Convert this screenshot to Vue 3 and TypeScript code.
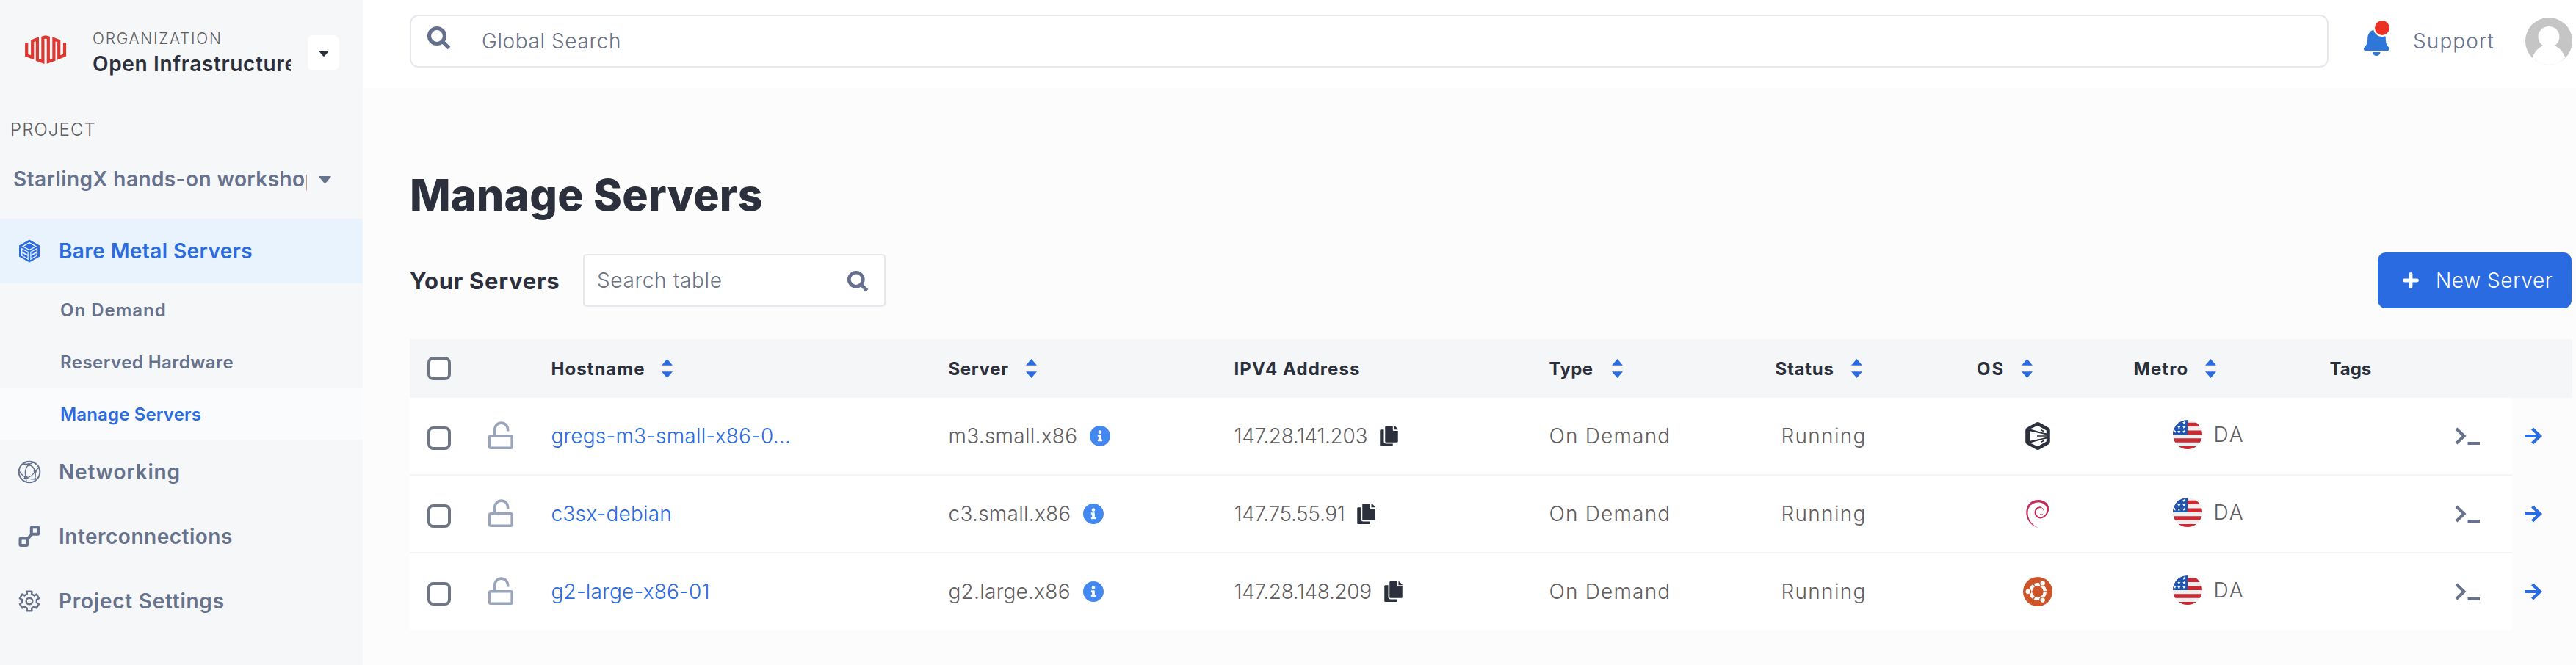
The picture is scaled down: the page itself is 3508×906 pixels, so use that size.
<script setup lang="ts">
interface NavItem { key: string; label: string }
interface Column { key: string; label: string; sortable: boolean }
interface Server { host: string; plan: string; ip: string; type: string; status: string; os: 'rocky' | 'debian' | 'ubuntu'; metro: string }

const subItems: NavItem[] = [
  { key: 'demand', label: 'On Demand' },
  { key: 'reserved', label: 'Reserved Hardware' },
  { key: 'manage', label: 'Manage Servers' },
]
const navItems: NavItem[] = [
  { key: 'networking', label: 'Networking' },
  { key: 'interconnections', label: 'Interconnections' },
  { key: 'settings', label: 'Project Settings' },
]
const columns: Column[] = [
  { key: 'hostname', label: 'Hostname', sortable: true },
  { key: 'server', label: 'Server', sortable: true },
  { key: 'address', label: 'IPV4 Address', sortable: false },
  { key: 'type', label: 'Type', sortable: true },
  { key: 'status', label: 'Status', sortable: true },
  { key: 'os', label: 'OS', sortable: true },
  { key: 'metro', label: 'Metro', sortable: true },
  { key: 'tags', label: 'Tags', sortable: false },
]
const servers: Server[] = [
  { host: 'gregs-m3-small-x86-0...', plan: 'm3.small.x86', ip: '147.28.141.203', type: 'On Demand', status: 'Running', os: 'rocky', metro: 'DA' },
  { host: 'c3sx-debian', plan: 'c3.small.x86', ip: '147.75.55.91', type: 'On Demand', status: 'Running', os: 'debian', metro: 'DA' },
  { host: 'g2-large-x86-01', plan: 'g2.large.x86', ip: '147.28.148.209', type: 'On Demand', status: 'Running', os: 'ubuntu', metro: 'DA' },
]

// Six-toothed gear outline, teeth pointing up and down.
const gear = Array.from({ length: 6 }, (_, i) => i * 60 - 90)
  .flatMap(a => [[a - 19, 10], [a - 14, 13.6], [a + 14, 13.6], [a + 19, 10]])
  .map(([a, r]) => `${(16 + r * Math.cos(a * Math.PI / 180)).toFixed(2)} ${(16 + r * Math.sin(a * Math.PI / 180)).toFixed(2)}`)
  .join('L')

// Five-pointed stars on the flag's canton.
const stars = [[15.3, 3.9], [8.3, 9.9], [15.3, 9.9], [2.3, 15.9], [8.3, 15.9], [15.3, 15.9]].map(([cx, cy]) =>
  Array.from({ length: 10 }, (_, i) => {
    const r = i % 2 ? 1 : 2.4
    const a = (i * 36 - 90) * Math.PI / 180
    return `${(cx + r * Math.cos(a)).toFixed(2)},${(cy + r * Math.sin(a)).toFixed(2)}`
  }).join(' '))
</script>

<template>
  <div class="app">
    <aside class="sidebar">
      <div class="org">
        <svg class="logo" viewBox="34 48 56 40"><path d="M36.2 58V75.2L44.2 78.3V55.9L50.9 53.3V81.2L58.4 83.9V51.4L62.1 50.4L65.8 51.4V83.9L73.4 81.2V53.3L80.2 55.9V78.3L88 75.2V58" /></svg>
        <div class="org-text">
          <div class="org-label">ORGANIZATION</div>
          <div class="org-name">Open Infrastructure</div>
        </div>
        <button class="org-toggle"><svg viewBox="0 0 14 8"><path d="M1 0h12q1.4 0 .5 1L8 7.2q-1 1-2 0L.5 1Q-.4 0 1 0z" /></svg></button>
      </div>
      <div class="project-label">PROJECT</div>
      <div class="project">
        <span class="project-name">StarlingX hands-on workshop</span>
        <svg class="project-caret" viewBox="0 0 17 10"><path d="M1.200 0h14.600q1.600 0 .6 1.200L9.700 9.200q-1.200 1.300-2.400 0L.6 1.200Q-.4 0 1.200 0z" /></svg>
      </div>
      <nav>
        <a class="nav active bare">
          <svg viewBox="0 0 32 32">
            <path class="fill" fill-rule="evenodd" d="M16 .5 30 8.500v15L16 31.500 2 23.500v-15zM16 3.800 5.500 9.800 16 15.200l10.500-5.400zM4.600 11.500v10.700l10.200 6V17zM27.400 11.500 17.200 17v11.200l10.200-6z" />
            <path class="fill" d="M16 5.500 23.500 9.800 16 13.800 8.500 9.800zM6.500 14l7 3.800v3l-7-3.800zM6.500 19l7 3.800v3l-7-3.800zM25.500 14l-7 3.800v3l7-3.800zM25.500 19l-7 3.800v3l7-3.800z" />
            <path class="fill" d="M2 9l2.800 1.500v12.800L2 23.500zM30 9l-2.800 1.500v12.800l2.800.2z" />
          </svg>
          <span>Bare Metal Servers</span>
        </a>
        <a v-for="s in subItems" :key="s.key" class="sub" :class="[s.key, { current: s.key === 'manage' }]"><span>{{ s.label }}</span></a>
        <a v-for="n in navItems" :key="n.key" class="nav" :class="n.key">
          <svg v-if="n.key === 'networking'" viewBox="0 0 32 32">
            <circle class="line" cx="16" cy="16" r="14.300" />
            <path class="line thin" d="M15 6C10 11 9.500 17 11.200 23.500L12 29.500M15 6c5 1.500 7.500 5 8.800 9 1 4 .5 7-.5 12M11.200 23.500C17 24 21 20 23.800 15L29 10M11.200 23.500C7 21 4 18.500 2.500 15M11.200 23.500c5 3 9 3 14.300 1.500M6 6.500C9 4.800 12 5 15 6l6-3M11.200 23.500 7 26" />
            <circle class="fill" cx="15" cy="6" r="2.200" /><circle class="fill" cx="23.800" cy="15" r="2.200" /><circle class="fill" cx="11.200" cy="23.500" r="2.200" />
          </svg>
          <svg v-else-if="n.key === 'interconnections'" viewBox="0 0 32 32">
            <path class="line bold" d="M13.500 19 19 13.500" />
            <rect class="line bold" x="3.500" y="18.500" width="9.500" height="9.500" rx="1" /><rect class="line bold" x="18.800" y="3.300" width="9.500" height="9.500" rx="1" />
          </svg>
          <svg v-else viewBox="0 0 32 32"><path class="line mid" :d="`M${gear}Z`" /><circle class="line mid" cx="16" cy="16" r="4.300" /></svg>
          <span>{{ n.label }}</span>
        </a>
      </nav>
    </aside>

    <main class="main">
      <header class="topbar">
        <div class="global-search">
          <svg class="glass" viewBox="0 0 32 32"><circle cx="13" cy="13" r="10.500" /><path d="M20.500 20.500 29.500 29.500" /></svg>
          <span>Global Search</span>
        </div>
        <svg class="bell" viewBox="0 0 36 48">
          <path d="M17.500 12C9.500 12 5.500 17.500 5.200 24c-.1 7-1.200 9.300-4.200 12.300C-1 38.500 0 41 2.300 41h30.400c2.300 0 3.300-2.500 1.300-4.700-3-3-4.100-5.300-4.200-12.300C29.500 17.500 25.500 12 17.500 12zM12 43h10.500c-.6 6.700-9.900 6.700-10.500 0z" />
          <circle class="ring" cx="25" cy="10" r="12" /><circle class="dot" cx="25" cy="10" r="10" />
        </svg>
        <span class="support">Support</span>
        <svg class="avatar" viewBox="0 0 64 64">
          <circle cx="32" cy="32" r="32" fill="#c5c5c5" />
          <path d="M32 12c-8.300 0-14.500 6.200-14.500 14 0 5 2.500 9.400 6.500 12C17 41.500 12.500 46.500 9.500 54.800A32 32 0 0 0 54.500 54.800C51.500 46.500 47 41.500 40 38c4-2.600 6.500-7 6.500-12 0-7.800-6.200-14-14.500-14z" fill="#fff" />
        </svg>
      </header>

      <h1 class="title">Manage Servers</h1>
      <div class="toolbar">
        <h2>Your Servers</h2>
        <div class="table-search">
          <span>Search table</span>
          <svg class="glass" viewBox="0 0 32 32"><circle cx="13" cy="13" r="10.500" /><path d="M20.500 20.500 29.500 29.500" /></svg>
        </div>
        <button class="new-server"><svg viewBox="0 0 22 22"><path d="M11 2.500v17M2.500 11h17" /></svg><span>New Server</span></button>
      </div>

      <div class="table">
        <div class="row head">
          <div class="cell check"><i class="box" /></div>
          <div class="cell" />
          <div v-for="c in columns" :key="c.key" class="cell" :class="`h-${c.key}`">
            <span>{{ c.label }}</span>
            <svg v-if="c.sortable" class="sort" viewBox="0 0 15 26"><path d="M7.500 0 15 8.700H0zM0 17.300h15L7.500 26z" /></svg>
          </div>
        </div>
        <div v-for="s in servers" :key="s.host" class="row body">
          <div class="cell check"><i class="box" /></div>
          <div class="cell">
            <svg class="lock" viewBox="0 0 34 38"><rect x="1.800" y="19.800" width="30.400" height="16.400" rx="1.500" /><path d="M8.800 19V11a8.900 8.900 0 0 1 17.800 0v2.500" /></svg>
          </div>
          <div class="cell host"><span>{{ s.host }}</span></div>
          <div class="cell plan">
            <span>{{ s.plan }}</span>
            <svg class="info" viewBox="8 8 496 496"><path d="M256 8C119.043 8 8 119.083 8 256c0 136.997 111.043 248 248 248s248-111.003 248-248C504 119.083 392.957 8 256 8zm0 110c23.196 0 42 18.804 42 42s-18.804 42-42 42-42-18.804-42-42 18.804-42 42-42zm56 254c0 6.627-5.373 12-12 12h-88c-6.627 0-12-5.373-12-12v-24c0-6.627 5.373-12 12-12h12v-64h-12c-6.627 0-12-5.373-12-12v-24c0-6.627 5.373-12 12-12h64c6.627 0 12 5.373 12 12v100h12c6.627 0 12 5.373 12 12v24z" /></svg>
          </div>
          <div class="cell ip">
            <span>{{ s.ip }}</span>
            <svg class="copy" viewBox="0 0 448 512"><path d="M320 448v40c0 13.255-10.745 24-24 24H24c-13.255 0-24-10.745-24-24V120c0-13.255 10.745-24 24-24h72v296c0 30.879 25.121 56 56 56h168zm0-344V0H152c-13.255 0-24 10.745-24 24v368c0 13.255 10.745 24 24 24h272c13.255 0 24-10.745 24-24V128H344c-13.200 0-24-10.800-24-24zm120.971-31.029L375.029 7.029A24 24 0 0 0 358.059 0H352v96h96v-6.059a24 24 0 0 0-7.029-16.970z" /></svg>
          </div>
          <div class="cell kind"><span>{{ s.type }}</span></div>
          <div class="cell status"><span>{{ s.status }}</span></div>
          <div class="cell os">
            <svg v-if="s.os === 'rocky'" viewBox="0 0 40 40">
              <path fill="#2b303c" d="M17.500 1.800q2.500-1.600 5 0l12 6.800q2.300 1.300 2.300 3.600v15.600q0 2.300-2.300 3.600l-12 6.800q-2.500 1.600-5 0l-12-6.800q-2.300-1.300-2.300-3.600V12.200q0-2.300 2.300-3.600z" />
              <path fill="#fff" d="M9.500 10.500 20 5.800l11.800 6.700v4.300zM9 13.300l22.800 5v3.600L9 26.700zM9.500 29.500l22.300-6.300v4.300L20 34.200z" />
              <path fill="none" stroke="#2b303c" stroke-width="1.600" d="M19 20h13M24 11.500l4.500 2.300M24 28.500l4.500-2.300M27.500 16.300l4.500 1M27.500 23.700l4.500-1" />
            </svg>
            <svg v-else-if="s.os === 'debian'" viewBox="0 0 40 40">
              <path fill="#c72a58" d="M22 39.300C10 37 3.800 27 4.300 17 4.800 7 12 .8 21.500 1.100c7 .2 13.300 4.500 13.700 11.400.2 3.400-1.200 6.200-3.200 8.700C33 18 33.500 15 32.500 12 30.500 6.500 25 4 19.500 4.500 11.500 5.300 6.800 10.500 6.500 18c-.2 9 5 17.500 15.500 21.300z" />
              <path fill="none" stroke="#c72a58" stroke-width="2" stroke-linecap="round" d="M33.200 12.500c1.200 6-2.500 11-7.200 12.500-5 1.500-9.600-2-9.400-7.200.1-4 3-6.800 6.800-6.600" />
              <path fill="none" stroke="#c72a58" stroke-width=".9" d="M23.400 11.200c2.800.2 4.600 2 4.700 4.500M23 20.500c1.500 1 3.200.6 4.200-.8" />
            </svg>
            <svg v-else viewBox="0 0 40 40">
              <circle cx="20" cy="20" r="20" fill="#cd5329" />
              <circle cx="20" cy="20" r="9.800" fill="none" stroke="#fff" stroke-width="4.400" />
              <path stroke="#cd5329" stroke-width="1.400" d="M20 20h13M20 20l-6.500-11.300M20 20l-6.500 11.300" />
              <circle cx="20" cy="20" r="7.500" fill="#cd5329" />
              <g fill="#fff" stroke="#cd5329" stroke-width="1.500"><circle cx="6.700" cy="20" r="3.900" /><circle cx="26.700" cy="8.400" r="3.900" /><circle cx="26.700" cy="31.600" r="3.900" /></g>
            </svg>
          </div>
          <div class="cell metro">
            <svg class="flag" viewBox="0 0 40 40">
              <path fill="#efefef" d="M0 0h40v40H0z" />
              <path fill="#c92a33" d="M0 3.700h40V9H0zM0 14.500h40V20H0zM0 25.300h40v5.400H0zM0 36h40v4H0z" />
              <path fill="#2156b0" d="M0 0h20v20H0z" />
              <polygon v-for="p in stars" :key="p" fill="#fff" :points="p" />
            </svg>
            <span>{{ s.metro }}</span>
          </div>
          <div class="cell" />
          <div class="cell"><svg class="terminal" viewBox="0 0 36 24"><path d="M2 2l10.500 10L2 22M17.500 22h16.500" /></svg></div>
          <div class="cell go"><svg class="arrow" viewBox="0 0 26 24"><path d="M2 12h21M12.500 2l10.500 10-10.500 10" /></svg></div>
        </div>
      </div>
    </main>
  </div>
</template>

<style>
body { margin: 0; }
</style>

<style scoped>
.app { display: flex; height: 906px; overflow: hidden; background: #fcfcfc; font-family: Inter, "Liberation Sans", sans-serif; font-size: 28px; color: #625e5f; }
.app * { box-sizing: border-box; }
svg { display: block; flex: none; overflow: visible; }
span { white-space: nowrap; }
button { border: 0; padding: 0; font: inherit; }

.sidebar { flex: none; width: 494px; background: #f6f7f9; }
.org { display: flex; height: 162px; padding-left: 34px; }
.logo { width: 56px; height: 40px; margin-top: 48px; fill: none; stroke: #dd3932; stroke-width: 4.200; stroke-miterlimit: 2; }
.org-text { width: 270px; margin: 38px 0 0 36px; overflow: hidden; white-space: nowrap; }
.org-label { line-height: 30px; font-size: 21px; font-weight: 350; letter-spacing: 1.700px; }
.org-name { line-height: 38px; font-weight: 600; letter-spacing: .65px; color: #2b303c; }
.org-toggle { display: flex; align-items: center; justify-content: center; width: 43px; height: 48px; margin: 48px 0 0 23px; border-radius: 8px; background: #fff; }
.org-toggle svg { width: 14px; height: 8px; margin-top: 2px; fill: #2b303c; }
.project-label { height: 62px; padding-left: 14px; line-height: 30px; font-size: 24px; font-weight: 350; letter-spacing: 1.100px; }
.project { display: flex; align-items: center; height: 40px; margin-bottom: 34px; padding-left: 18px; color: #67728d; }
.project-name { width: 400px; overflow: hidden; font-weight: 600; letter-spacing: .4px; }
.project-caret { width: 17px; height: 10px; margin: 2px 0 0 16px; fill: #67728d; }

.nav { display: flex; align-items: center; gap: 24px; height: 88px; padding-left: 24px; font-weight: 600; color: #67728d; }
.nav svg { width: 32px; height: 32px; }
.active { background: #e8f3fd; color: #2b6be2; letter-spacing: .4px; }
.fill { fill: currentColor; }
.line { fill: none; stroke: currentColor; stroke-width: 2; stroke-linejoin: round; }
.thin { stroke-width: 1.400; }
.mid { stroke-width: 2.500; }
.bold { stroke-width: 4; }
.sub { display: flex; align-items: center; height: 71px; padding: 2px 0 0 82px; font-size: 24px; font-weight: 600; color: #67728d; }
.current { background: #f9fbfd; color: #2b6be2; }
.demand { letter-spacing: 1px; }
.reserved { letter-spacing: .45px; }
.manage { letter-spacing: .15px; }
.networking { letter-spacing: .8px; }
.interconnections { letter-spacing: .5px; }
.settings { letter-spacing: .75px; }

.main { flex: 1; min-width: 0; }
.topbar { display: flex; height: 120px; padding-left: 64px; background: #fff; }
.global-search { display: flex; width: 2613px; height: 72px; margin-top: 20px; padding-left: 22px; border: 2px solid #e7e8ee; border-radius: 12px; font-weight: 350; color: #6a7283; letter-spacing: .6px; line-height: 68px; }
.glass { fill: none; stroke: #65718c; stroke-width: 5.200; }
.global-search .glass { width: 32px; height: 32px; margin: 14px 42px 0 0; }
.bell { width: 36px; height: 48px; margin: 28px 31px 0 48px; fill: #2e77da; }
.bell .ring { fill: #fff; }
.bell .dot { fill: #ec3323; }
.support { width: 153px; margin-top: 22px; line-height: 68px; font-weight: 350; letter-spacing: 1.100px; color: #67728d; }
.avatar { width: 64px; height: 64px; margin-top: 24px; }

.title { height: 80px; margin: 106px 0 0 64px; font-size: 59px; line-height: 80px; font-weight: 800; letter-spacing: .2px; color: #2b303c; }
.toolbar { display: flex; align-items: center; height: 76px; margin: 38px 6px 42px 64px; }
.toolbar h2 { width: 236px; margin: 0; font-size: 31px; font-weight: 700; letter-spacing: .7px; color: #2b303c; white-space: nowrap; }
.table-search { display: flex; align-items: center; justify-content: space-between; width: 412px; height: 72px; padding: 0 21px 0 17px; border: 2px solid #e7e8ee; border-radius: 5px; background: #fff; font-weight: 350; color: #6a7283; letter-spacing: .65px; }
.table-search .glass { width: 29px; height: 29px; margin-top: 2px; }
.new-server { display: flex; align-items: center; width: 264px; height: 76px; margin-left: auto; padding-left: 34px; border-radius: 11px; background: #2b6be2; color: #fff; font-weight: 350; letter-spacing: .6px; }
.new-server svg { width: 22px; height: 22px; margin-right: 23px; fill: none; stroke: #fff; stroke-width: 4.800; stroke-linecap: round; }

.table { margin: 0 5px 0 64px; }
.row { display: grid; grid-template-columns: 107px 84px 541px 389px 429px 308px 276px 212px 267px 172px 78px 82px; height: 106px; }
.cell { display: flex; align-items: center; min-width: 0; }
.cell > span { margin-left: 1.500px; }
.head { height: 80px; background: #f5f6f8; font-size: 24px; font-weight: 700; color: #2b303c; }
.sort { width: 15px; height: 26px; margin-left: 23px; fill: #2b6be2; }
.h-hostname { letter-spacing: 1px; }
.h-server { letter-spacing: .65px; }
.h-address { letter-spacing: 1.050px; }
.h-type { letter-spacing: .4px; }
.h-type .sort { margin-left: 25px; }
.h-status { letter-spacing: .75px; }
.h-os { letter-spacing: 2px; }
.h-os > span { margin-left: 0; }
.h-metro { letter-spacing: 1.100px; }

.body { font-weight: 350; }
.body .cell { border-bottom: 2px solid #f4f5f6; background: #fff; }
.body:last-child { height: 104px; }
.body:last-child .cell { border-bottom: 0; }
.body .cell.go { padding-left: 15px; border-bottom-color: #fcfcfc; background: #fcfcfc; }
.check { padding-left: 24px; }
.box { width: 32px; height: 32px; border: 4px solid #6e7685; border-radius: 8px; background: #fff; }
.body .box { margin-top: 6px; }
.lock { width: 34px; height: 38px; margin-top: -2px; fill: none; stroke: #9aa5bb; stroke-width: 3.600; }
.host { color: #2b6be2; letter-spacing: .2px; }
.plan { letter-spacing: .25px; }
.info { width: 28px; height: 28px; margin-left: 17px; fill: #4387f1; }
.ip { letter-spacing: -.35px; }
.copy { width: 25px; height: 28px; margin-left: 17px; fill: #2b303c; }
.kind { letter-spacing: 1.200px; }
.status { padding-left: 8px; letter-spacing: 1.300px; }
.os { padding-left: 63px; }
.os svg { width: 40px; height: 40px; }
.metro { padding-left: 55px; padding-bottom: 4px; letter-spacing: 2px; }
.flag { width: 40px; height: 40px; margin-right: 14px; border-radius: 50%; overflow: hidden; }
.terminal { width: 36px; height: 24px; fill: none; stroke: #67728d; stroke-width: 4.200; }
.arrow { width: 26px; height: 24px; fill: none; stroke: #2b6be2; stroke-width: 4.200; }
</style>
